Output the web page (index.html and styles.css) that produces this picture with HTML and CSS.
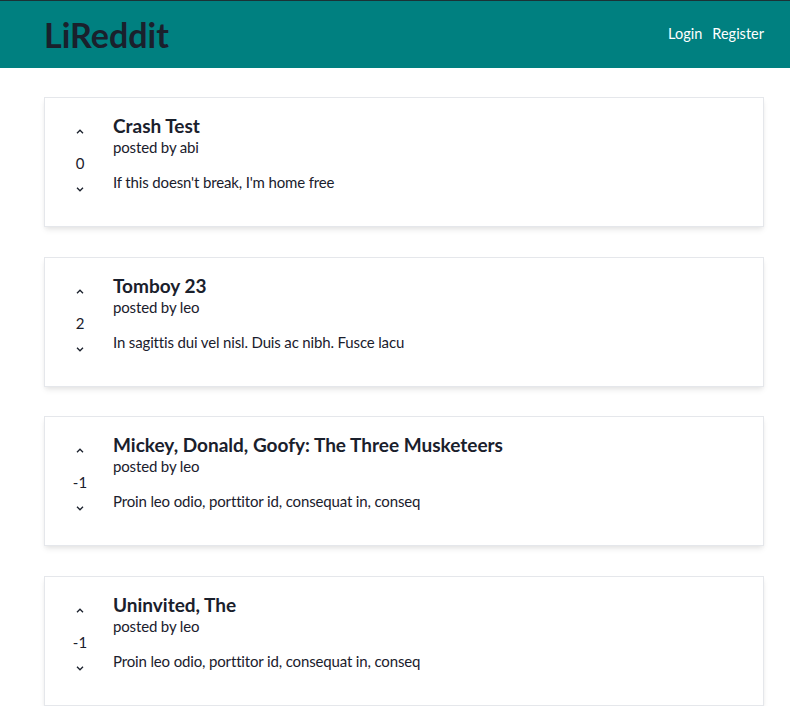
FILE: index.html
```html
<!DOCTYPE html>
<html lang="en">
<head>
<meta charset="utf-8">
<title>LiReddit</title>
<link rel="stylesheet" href="styles.css">
</head>
<body>
<header class="navbar">
  <div class="nav-inner">
    <h1 class="logo">LiReddit</h1>
    <nav class="nav-links">
      <a href="#" class="nav-link">Login</a>
      <a href="#" class="nav-link">Register</a>
    </nav>
  </div>
</header>
<main class="feed">
  <article class="card">
    <div class="vote">
      <button class="vote-btn up" aria-label="upvote"><svg width="8" height="5" viewBox="0 0 8 5"><path d="M1 4.2 L4 1.2 L7 4.2" fill="none" stroke="#1a202c" stroke-width="1.3"/></svg></button>
      <span class="count">0</span>
      <button class="vote-btn down" aria-label="downvote"><svg width="8" height="5" viewBox="0 0 8 5"><path d="M1 0.8 L4 3.8 L7 0.8" fill="none" stroke="#1a202c" stroke-width="1.3"/></svg></button>
    </div>
    <div class="post">
      <h2 class="title">Crash Test</h2>
      <p class="author">posted by abi</p>
      <p class="snippet">If this doesn't break, I'm home free</p>
    </div>
  </article>
  <article class="card">
    <div class="vote">
      <button class="vote-btn up" aria-label="upvote"><svg width="8" height="5" viewBox="0 0 8 5"><path d="M1 4.2 L4 1.2 L7 4.2" fill="none" stroke="#1a202c" stroke-width="1.3"/></svg></button>
      <span class="count">2</span>
      <button class="vote-btn down" aria-label="downvote"><svg width="8" height="5" viewBox="0 0 8 5"><path d="M1 0.8 L4 3.8 L7 0.8" fill="none" stroke="#1a202c" stroke-width="1.3"/></svg></button>
    </div>
    <div class="post">
      <h2 class="title">Tomboy 23</h2>
      <p class="author">posted by leo</p>
      <p class="snippet">In sagittis dui vel nisl. Duis ac nibh. Fusce lacu</p>
    </div>
  </article>
  <article class="card">
    <div class="vote">
      <button class="vote-btn up" aria-label="upvote"><svg width="8" height="5" viewBox="0 0 8 5"><path d="M1 4.2 L4 1.2 L7 4.2" fill="none" stroke="#1a202c" stroke-width="1.3"/></svg></button>
      <span class="count">-1</span>
      <button class="vote-btn down" aria-label="downvote"><svg width="8" height="5" viewBox="0 0 8 5"><path d="M1 0.8 L4 3.8 L7 0.8" fill="none" stroke="#1a202c" stroke-width="1.3"/></svg></button>
    </div>
    <div class="post">
      <h2 class="title">Mickey, Donald, Goofy: The Three Musketeers</h2>
      <p class="author">posted by leo</p>
      <p class="snippet">Proin leo odio, porttitor id, consequat in, conseq</p>
    </div>
  </article>
  <article class="card">
    <div class="vote">
      <button class="vote-btn up" aria-label="upvote"><svg width="8" height="5" viewBox="0 0 8 5"><path d="M1 4.2 L4 1.2 L7 4.2" fill="none" stroke="#1a202c" stroke-width="1.3"/></svg></button>
      <span class="count">-1</span>
      <button class="vote-btn down" aria-label="downvote"><svg width="8" height="5" viewBox="0 0 8 5"><path d="M1 0.8 L4 3.8 L7 0.8" fill="none" stroke="#1a202c" stroke-width="1.3"/></svg></button>
    </div>
    <div class="post">
      <h2 class="title">Uninvited, The</h2>
      <p class="author">posted by leo</p>
      <p class="snippet">Proin leo odio, porttitor id, consequat in, conseq</p>
    </div>
  </article>
</main>
</body>
</html>
```
FILE: styles.css
```css
* { box-sizing: border-box; }
html, body { margin: 0; padding: 0; background: #ffffff; }
body {
  font-family: Lato, "Open Sans", sans-serif;
  color: #1a202c;
  overflow: hidden;
}
.navbar {
  background: #008080;
  border-top: 1px solid #1b3236;
  height: 68px;
}
.nav-inner {
  width: 720px;
  margin-left: 44px;
  height: 67px;
  display: flex;
  align-items: center;
  justify-content: space-between;
}
.logo {
  margin: 0;
  font-size: 34px;
  font-weight: 700;
  line-height: 36px;
  color: #1a202c;
}
.nav-links {
  display: flex;
  gap: 10px;
  margin-top: -2px;
}
.nav-link {
  color: #ffffff;
  text-decoration: none;
  font-size: 14.5px;
  line-height: 20px;
}
.feed {
  width: 720px;
  margin: 29px 0 0 44px;
  display: flex;
  flex-direction: column;
  gap: 29.5px;
}
.card {
  display: flex;
  align-items: flex-start;
  border: 1px solid #e5e7eb;
  box-shadow: 0 4px 6px -1px rgba(0,0,0,0.08), 0 2px 4px -1px rgba(0,0,0,0.05);
  padding: 20px;
  background: #fff;
}
.vote {
  width: 30px;
  margin-right: 18px;
  display: flex;
  flex-direction: column;
  align-items: center;
}
.vote-btn {
  border: 0;
  background: transparent;
  padding: 0;
  width: 30px;
  display: flex;
  align-items: center;
  justify-content: center;
}
.vote-btn svg { display: block; }
.vote-btn.up { height: 27px; }
.vote-btn.down { height: 33px; }
.count {
  margin-top: 8px;
  font-size: 15px;
  line-height: 20px;
}
.post {
  margin-top: -4px;
}
.title {
  margin: 0;
  font-size: 19px;
  font-weight: 700;
  line-height: 23px;
}
.author {
  margin: 0;
  font-size: 15px;
  line-height: 20px;
  letter-spacing: -0.15px;
}
.snippet {
  margin: 15px 0 0;
  font-size: 15px;
  line-height: 20px;
  letter-spacing: -0.15px;
}
```
